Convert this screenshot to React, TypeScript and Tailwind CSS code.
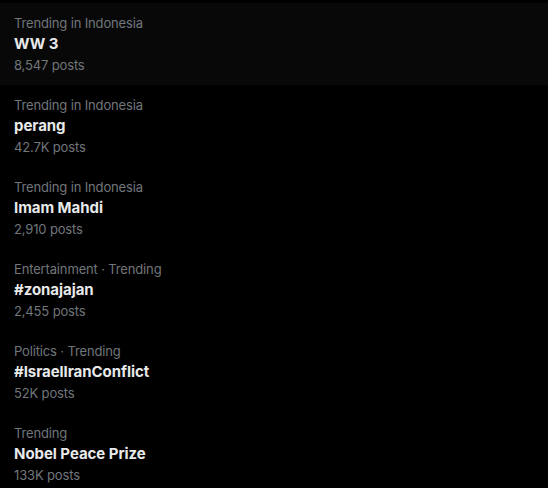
import React from "react";

const items = [
  { cat: "Trending in Indonesia", title: "WW 3", posts: "8,547 posts", hover: true },
  { cat: "Trending in Indonesia", title: "perang", posts: "42.7K posts" },
  { cat: "Trending in Indonesia", title: "Imam Mahdi", posts: "2,910 posts" },
  { cat: "Entertainment · Trending", title: "#zonajajan", posts: "2,455 posts" },
  { cat: "Politics · Trending", title: "#IsraelIranConflict", posts: "52K posts" },
  { cat: "Trending", title: "Nobel Peace Prize", posts: "133K posts" },
];

export default function App() {
  return (
    <div
      className="w-[548px] h-[488px] overflow-hidden bg-black pt-[3px]"
      style={{ fontFamily: "Inter, 'Noto Sans', sans-serif" }}
    >
      {items.map((it, i) => (
        <div
          key={i}
          className={`h-[82px] px-[14px] pt-[10px] flex flex-col ${it.hover ? "bg-[#080808]" : ""}`}
        >
          <div className="text-[13px] leading-[20px] tracking-[-0.15px] text-[#71767b]">{it.cat}</div>
          <div className="text-[15px] leading-[21px] font-bold tracking-[-0.05px] text-[#e7e9ea]">{it.title}</div>
          <div className="text-[13px] leading-[22px] tracking-[-0.15px] text-[#71767b]">{it.posts}</div>
        </div>
      ))}
    </div>
  );
}
